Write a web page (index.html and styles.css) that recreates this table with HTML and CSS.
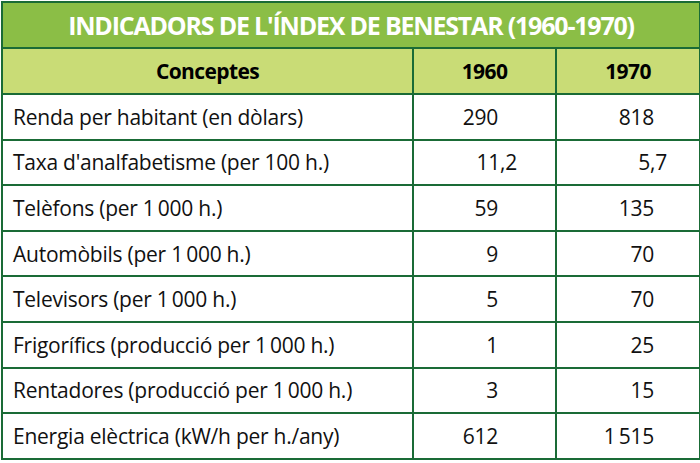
FILE: index.html
```html
<!DOCTYPE html>
<html lang="ca">
<head>
<meta charset="utf-8">
<title>Indicadors de l'índex de benestar</title>
<link rel="stylesheet" href="styles.css">
</head>
<body>
<table class="tbl">
  <colgroup>
    <col class="col1">
    <col class="col2">
    <col class="col3">
  </colgroup>
  <thead>
    <tr><th class="title" colspan="3">INDICADORS DE L'ÍNDEX DE BENESTAR (1960-1970)</th></tr>
    <tr class="head"><th>Conceptes</th><th>1960</th><th>1970</th></tr>
  </thead>
  <tbody>
    <tr><td class="c1">Renda per habitant (en dòlars)</td><td class="c2">290</td><td class="c3">818</td></tr>
    <tr><td class="c1">Taxa d'analfabetisme (per 100 h.)</td><td class="c2 dec">11,2</td><td class="c3 dec">5,7</td></tr>
    <tr><td class="c1">Telèfons (per 1&#8201;000 h.)</td><td class="c2">59</td><td class="c3">135</td></tr>
    <tr><td class="c1">Automòbils (per 1&#8201;000 h.)</td><td class="c2">9</td><td class="c3">70</td></tr>
    <tr><td class="c1">Televisors (per 1&#8201;000 h.)</td><td class="c2">5</td><td class="c3">70</td></tr>
    <tr><td class="c1">Frigorífics (producció per 1&#8201;000 h.)</td><td class="c2">1</td><td class="c3">25</td></tr>
    <tr><td class="c1">Rentadores (producció per 1&#8201;000 h.)</td><td class="c2">3</td><td class="c3">15</td></tr>
    <tr><td class="c1">Energia elèctrica (kW/h per h./any)</td><td class="c2">612</td><td class="c3">1&#8201;515</td></tr>
  </tbody>
</table>
</body>
</html>
```
FILE: styles.css
```css
html, body {
  margin: 0;
  padding: 0;
  background: #ffffff;
}
body {
  font-family: "Open Sans", "Noto Sans", sans-serif;
  color: #111111;
}
.tbl {
  border-collapse: collapse;
  width: 698px;
  table-layout: fixed;
  margin: 1px 0 0 1px;
}
.col1 { width: 411px; }
.col2 { width: 143px; }
.col3 { width: 144px; }
.tbl th, .tbl td {
  border: 2px solid #1a6b36;
  padding: 0;
  white-space: nowrap;
}
.title {
  background: #8bbe46;
  color: #ffffff;
  height: 44px;
  font-size: 25px;
  font-weight: 700;
  letter-spacing: -1.2px;
  text-align: center;
}
.head th {
  background: #c9dc76;
  color: #000000;
  height: 44px;
  font-size: 21px;
  font-weight: 700;
  letter-spacing: -0.6px;
  text-align: center;
}
.tbl td {
  height: 43.6px;
  font-size: 21px;
  font-weight: 400;
  letter-spacing: -0.25px;
}
.tbl td.c1 {
  padding-left: 10px;
  text-align: left;
}
.tbl td.c2 {
  text-align: right;
  padding-right: 57px;
}
.tbl td.c3 {
  text-align: right;
  padding-right: 45px;
}
.tbl td.c2.dec { padding-right: 38px; }
.tbl td.c3.dec { padding-right: 32px; }
```
